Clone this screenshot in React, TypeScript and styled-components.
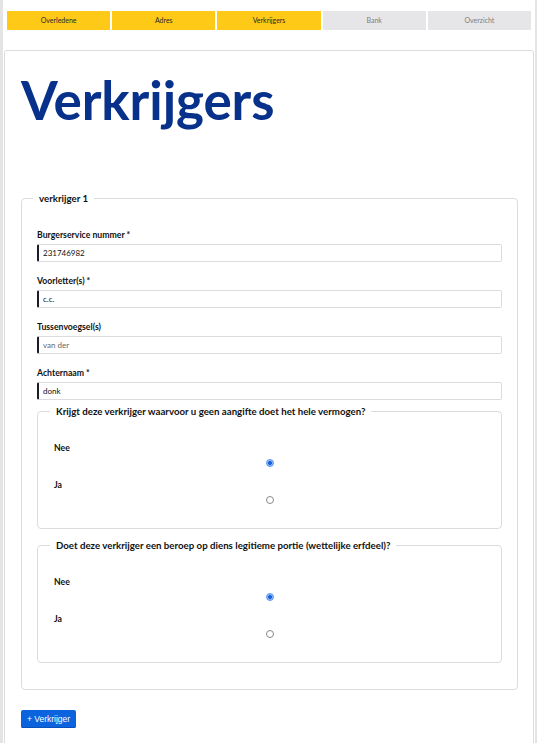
import React from "react";
import styled, { createGlobalStyle } from "styled-components";

const Global = createGlobalStyle`
  html, body { margin: 0; padding: 0; background: #fff; }
  body { font-family: Lato, "Noto Sans", sans-serif; color: #111; }
  * { box-sizing: border-box; }
`;

const Page = styled.div`
  min-height: 743px;
  border-left: 3px solid #e4e4e6;
  border-right: 2px solid #e4e4e6;
  padding: 11px 1px 0 1px;
`;

const Steps = styled.nav`
  display: flex;
  gap: 2px;
  margin: 0 3px 0 3px;
`;

const Step = styled.div<{ $done: boolean }>`
  flex: 1;
  height: 19px;
  line-height: 19px;
  text-align: center;
  font-size: 7px;
  background: ${(p) => (p.$done ? "#ffc917" : "#e6e6e9")};
  color: ${(p) => (p.$done ? "#2a2a2a" : "#7d7d80")};
`;

const Card = styled.main`
  margin-top: 20px;
  border: 1px solid #dcdcdf;
  border-radius: 3px;
  padding: 22px 15px 40px 16px;
`;

const Title = styled.h1`
  margin: 0 0 66px 0;
  font-size: 53px;
  line-height: 53px;
  font-weight: 700;
  color: #07318a;
  letter-spacing: -0.1px;
`;

const Set = styled.fieldset<{ $inner?: boolean }>`
  margin: ${(p) => (p.$inner ? "5px 0 0 0" : "0")};
  border: 1px solid #dcdcdf;
  border-radius: 4px;
  padding: ${(p) => (p.$inner ? "25px 16px 24px 16px" : "25px 15px 26px 15px")};
  min-width: 0;
  & + & {
    margin-top: 10px;
  }
`;

const Legend = styled.legend`
  font-size: 9.7px;
  line-height: 12px;
  font-weight: 700;
  padding: 0 6px;
  margin-left: -4px;
  color: #111;
`;

const Field = styled.div`
  display: flex;
  flex-direction: column;
  gap: 3px;
  & + & {
    margin-top: 13px;
  }
`;

const Label = styled.label`
  font-size: 8.7px;
  line-height: 12px;
  font-weight: 700;
  color: #111;
`;

const Input = styled.input<{ $muted?: boolean }>`
  height: 18px;
  border: 1px solid #dcdcdf;
  border-left: 2px solid #1b1b2a;
  border-radius: 2px;
  padding: 0 4px;
  font-family: Lato, "Noto Sans", sans-serif;
  font-size: 8px;
  color: ${(p) => (p.$muted ? "#666" : "#111")};
  background: #fff;
  outline: none;
`;

const Options = styled.div`
  display: flex;
  flex-direction: column;
  gap: 12px;
`;

const Option = styled.div`
  display: flex;
  flex-direction: column;
  gap: 5px;
`;

const Radio = styled.input`
  appearance: none;
  margin: 0 auto;
  width: 8px;
  height: 8px;
  border-radius: 50%;
  border: 1px solid #8a8a8a;
  background: #fff;
  &:checked {
    border-color: #5b97f2;
    background: radial-gradient(circle, #1d5fd8 0 1.6px, #8cb8f7 2.2px);
  }
`;

const AddButton = styled.button`
  margin-top: 20px;
  width: 55px;
  height: 18px;
  padding: 0;
  border: none;
  border-radius: 2px;
  background: #0b63de;
  box-shadow: inset 0 -1px 0 #0950b8;
  color: #fff;
  font-family: "Liberation Sans", Arial, sans-serif;
  font-size: 8.5px;
`;

const steps = [
  { name: "Overledene", done: true },
  { name: "Adres", done: true },
  { name: "Verkrijgers", done: true },
  { name: "Bank", done: false },
  { name: "Overzicht", done: false },
];

const fields = [
  { label: "Burgerservice nummer *", value: "231746982" },
  { label: "Voorletter(s) *", value: "c.c." },
  { label: "Tussenvoegsel(s)", value: "van der", muted: true },
  { label: "Achternaam *", value: "donk" },
];

const questions = [
  { id: "vermogen", text: "Krijgt deze verkrijger waarvoor u geen aangifte doet het hele vermogen?" },
  { id: "portie", text: "Doet deze verkrijger een beroep op diens legitieme portie (wettelijke erfdeel)?" },
];

export default function App() {
  return (
    <>
      <Global />
      <Page>
        <Steps>
          {steps.map((s) => (
            <Step key={s.name} $done={s.done}>
              {s.name}
            </Step>
          ))}
        </Steps>
        <Card>
          <Title>Verkrijgers</Title>
          <Set>
            <Legend>verkrijger 1</Legend>
            {fields.map((f) => (
              <Field key={f.label}>
                <Label>{f.label}</Label>
                <Input defaultValue={f.value} $muted={f.muted} />
              </Field>
            ))}
            {questions.map((q) => (
              <Set $inner key={q.id}>
                <Legend>{q.text}</Legend>
                <Options>
                  <Option>
                    <Label>Nee</Label>
                    <Radio type="radio" name={q.id} defaultChecked />
                  </Option>
                  <Option>
                    <Label>Ja</Label>
                    <Radio type="radio" name={q.id} />
                  </Option>
                </Options>
              </Set>
            ))}
          </Set>
          <AddButton type="button">+ Verkrijger</AddButton>
        </Card>
      </Page>
    </>
  );
}
